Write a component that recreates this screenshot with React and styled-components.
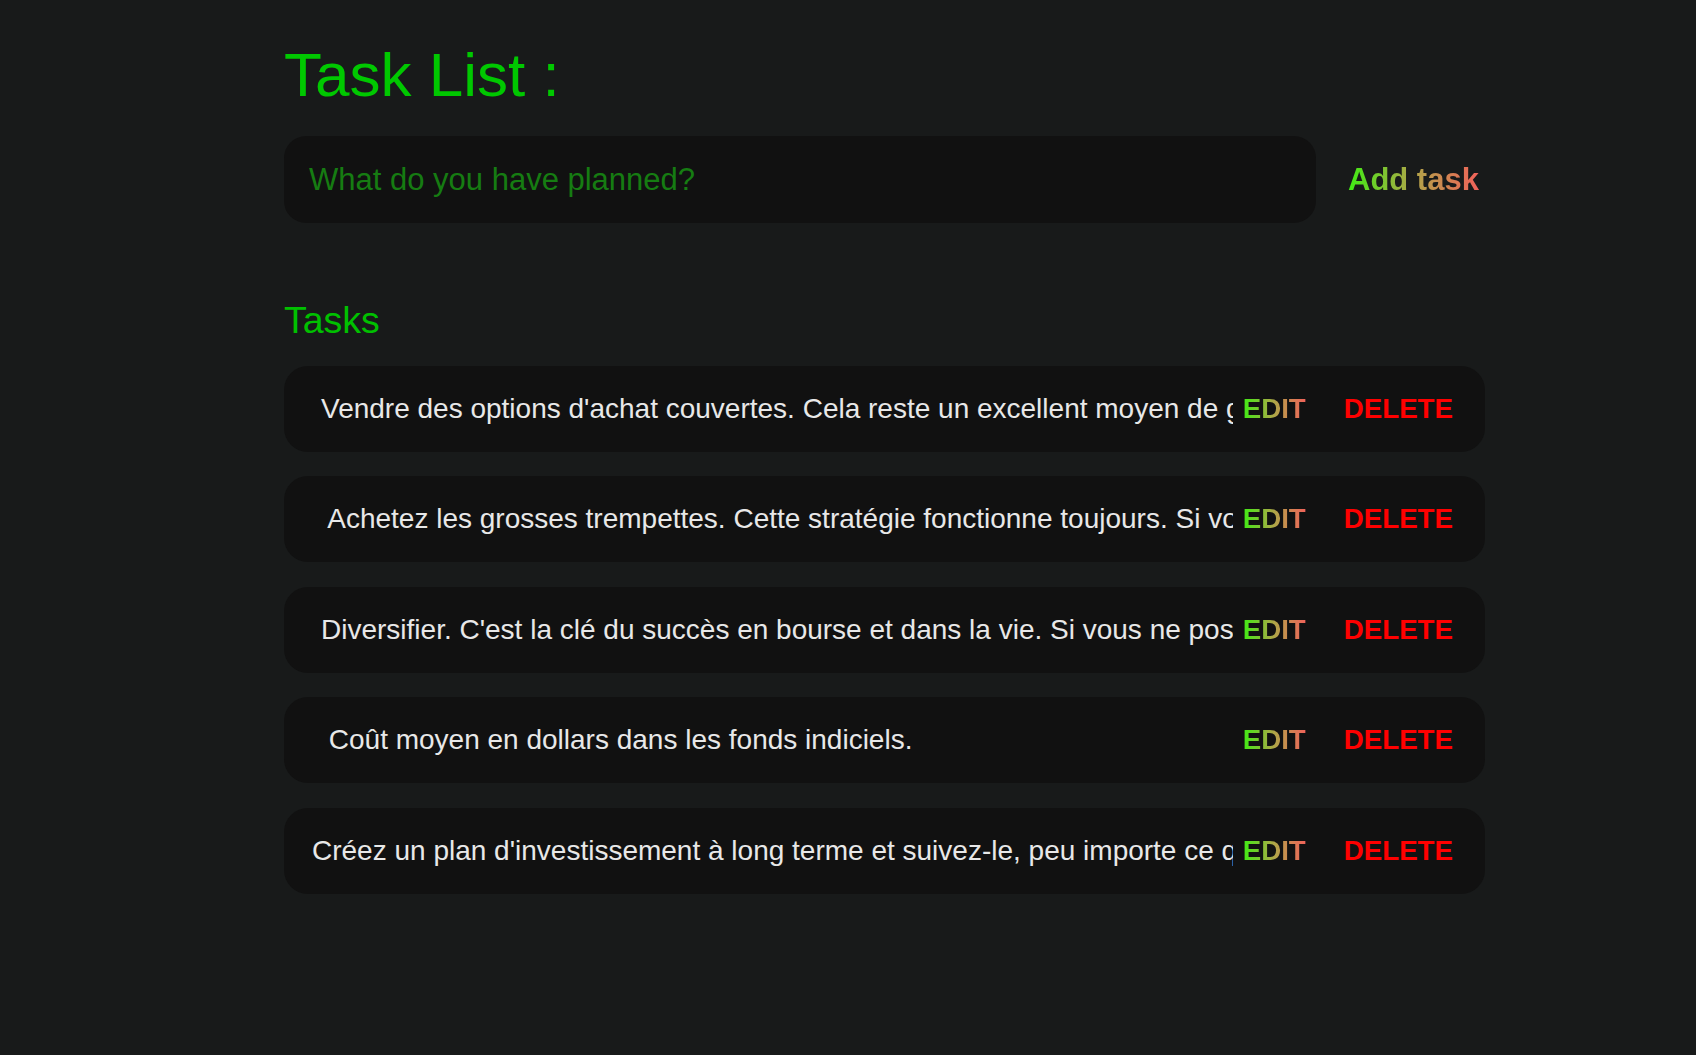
import React from "react";
import styled, { createGlobalStyle } from "styled-components";

const GlobalStyle = createGlobalStyle`
  html, body {
    margin: 0;
    background: #181a1a;
    font-family: "Liberation Sans", Arial, sans-serif;
  }
`;

const Page = styled.main`
  min-height: 100vh;
  padding: 39px 0 0 284px;
  box-sizing: border-box;
`;

const Wrapper = styled.div`
  width: 1201px;
`;

const Title = styled.h1`
  margin: 0;
  font-size: 62px;
  line-height: 1.15;
  font-weight: 400;
  color: #00c800;
`;

const Form = styled.form`
  display: flex;
  align-items: center;
  margin-top: 26px;
`;

const TaskInput = styled.input`
  width: 1032px;
  height: 87px;
  box-sizing: border-box;
  padding: 0 25px;
  border: none;
  outline: none;
  border-radius: 22px;
  background: #111111;
  color: #e8e8e8;
  font-family: inherit;
  font-size: 31px;
  &::placeholder {
    color: #167c12;
  }
`;

const gradientText = `
  background: linear-gradient(90deg, #40ec14 0%, #b0a548 50%, #f2625a 100%);
  -webkit-background-clip: text;
  background-clip: text;
  color: transparent;
`;

const AddButton = styled.button`
  border: none;
  padding: 0 0 0 32px;
  background: none;
  cursor: pointer;
  font-family: inherit;
  font-size: 31px;
  font-weight: 700;
  & span {
    ${gradientText}
  }
`;

const SectionTitle = styled.h2`
  margin: 76px 0 23.5px;
  font-size: 37.5px;
  line-height: 1.15;
  font-weight: 400;
  color: #00c000;
`;

const List = styled.div`
  display: flex;
  flex-direction: column;
  gap: 24.5px;
`;

const Row = styled.div`
  display: flex;
  align-items: center;
  height: 86px;
  padding: 0 32px 0 0;
  border-radius: 24px;
  background: #111111;
`;

const TaskText = styled.div`
  flex: 1;
  min-width: 0;
  overflow: hidden;
  white-space: pre;
  padding-left: ${(p) => p.$indent}px;
  font-size: 28px;
  color: #e8e8e8;
`;

const ActionButton = styled.button`
  border: none;
  background: none;
  padding: 0;
  margin-left: ${(p) => p.$gap}px;
  cursor: pointer;
  font-family: inherit;
  font-size: 27.7px;
  font-weight: 700;
  ${(p) => (p.$danger ? "color: #ff0000;" : "")}
  & span {
    ${(p) => (p.$danger ? "" : gradientText)}
  }
`;

const tasks = [
  {
    text: "Vendre des options d'achat couvertes. Cela reste un excellent moyen de générer des revenus.",
    indent: 37,
  },
  {
    text: " Achetez les grosses trempettes. Cette stratégie fonctionne toujours. Si vous avez des liquidités, achetez.",
    indent: 37,
  },
  {
    text: "Diversifier. C'est la clé du succès en bourse et dans la vie. Si vous ne possédez qu'une seule action...",
    indent: 37,
  },
  {
    text: " Coût moyen en dollars dans les fonds indiciels.",
    indent: 37,
  },
  {
    text: "Créez un plan d'investissement à long terme et suivez-le, peu importe ce qui se passe sur le marché.",
    indent: 28,
  },
];

export default function App() {
  return (
    <>
      <GlobalStyle />
      <Page>
        <Wrapper>
          <Title>Task List :</Title>
          <Form onSubmit={(e) => e.preventDefault()}>
            <TaskInput type="text" placeholder="What do you have planned?" />
            <AddButton type="submit">
              <span>Add task</span>
            </AddButton>
          </Form>

          <SectionTitle>Tasks</SectionTitle>
          <List>
            {tasks.map((task, i) => (
              <Row key={i}>
                <TaskText $indent={task.indent}>{task.text}</TaskText>
                <ActionButton $gap={10}>
                  <span>EDIT</span>
                </ActionButton>
                <ActionButton $gap={38} $danger>
                  <span>DELETE</span>
                </ActionButton>
              </Row>
            ))}
          </List>
        </Wrapper>
      </Page>
    </>
  );
}
